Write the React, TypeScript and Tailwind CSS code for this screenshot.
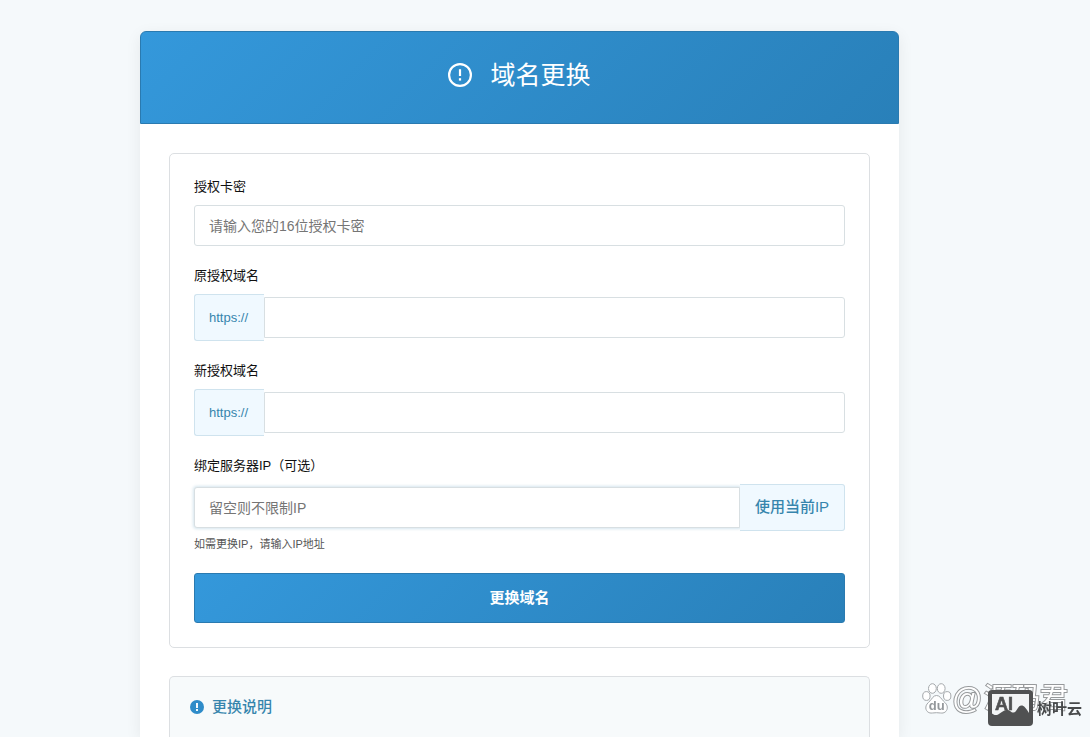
import type { ReactNode } from "react";

const inputClass =
  "h-[41px] w-full min-w-0 border border-[#d8dfe2] bg-white px-3.5 text-sm text-[#333] placeholder:text-[#757575] outline-none";

const AlertOutline = () => (
  <svg viewBox="0 0 24 24" className="size-6 shrink-0" fill="none" aria-hidden="true">
    <circle cx="12" cy="12" r="10.9" stroke="currentColor" strokeWidth="2.2" />
    <path d="M12 6.2v6.8" stroke="currentColor" strokeWidth="2.2" />
    <path d="M12 15.2v2.4" stroke="currentColor" strokeWidth="2.2" />
  </svg>
);

const AlertSolid = () => (
  <svg viewBox="0 0 14 14" className="size-3.5 shrink-0" aria-hidden="true">
    <circle cx="7" cy="7" r="7" fill="#2f8cc9" />
    <path d="M7 2.9v5" stroke="#fff" strokeWidth="1.9" />
    <path d="M7 9v1.9" stroke="#fff" strokeWidth="1.9" />
  </svg>
);

const Field = ({ id, label, children }: { id: string; label: string; children: ReactNode }) => (
  <div>
    <label htmlFor={id} className="mb-2 block text-[13px] leading-5 text-[#111]">
      {label}
    </label>
    {children}
  </div>
);

const DomainInput = ({ id }: { id: string }) => (
  <div className="flex h-[47px] items-center">
    <span className="flex h-full w-[70px] shrink-0 items-center rounded-l-[3px] border border-r-0 border-[#cfe3ee] bg-[#f0f9ff] pl-3.5 text-[13px] text-[#3685ad]">
      https://
    </span>
    <input id={id} type="text" className={`${inputClass} rounded-r-[3px]`} />
  </div>
);

const Watermark = () => (
  <div className="pointer-events-none fixed right-1.5 bottom-2 h-14 w-[162px]" aria-hidden="true">
    <svg viewBox="0 0 30 32" className="absolute top-[10px] left-0 h-8 w-[30px]" fill="#fff" stroke="#a3a7aa">
      <ellipse cx="10.4" cy="5.5" rx="3.9" ry="4.8" />
      <ellipse cx="19.2" cy="5.5" rx="3.9" ry="4.8" />
      <ellipse cx="4.4" cy="13" rx="3.7" ry="4.4" />
      <ellipse cx="25.2" cy="13" rx="3.7" ry="4.4" />
      <path d="M14.5 12.5c3.4 0 4.6 3.200 6.800 5.400 2.300 2.200 4.400 4 4 7.300-.5 3.600-3.400 5.300-6.600 4.800-2.800-.4-5.600-.4-8.400 0-3.300.5-6.200-1.400-6.500-5-.2-3.100 2-5 4.200-7.100 2.200-2.200 3.100-5.400 6.500-5.400z" />
      <text x="14.700" y="27" textAnchor="middle" fontSize="13" fill="#94989b" stroke="none" className="font-['Liberation_Sans',sans-serif] font-bold">
        du
      </text>
    </svg>
    <span className="absolute top-2.5 left-[30px] text-[30px] leading-8 whitespace-nowrap text-white [-webkit-text-stroke:2px_#96999b] [paint-order:stroke_fill]">
      @
    </span>
    <span className="absolute top-2.5 left-[62px] text-[28px] leading-8 whitespace-nowrap text-white [-webkit-text-stroke:2px_#96999b] [paint-order:stroke_fill]">
      源码君
    </span>
    <svg viewBox="0 0 45 36" className="absolute top-[17px] left-[66px] h-9 w-[45px]">
      <rect width="45" height="36" rx="4" fill="#505152" />
      <path d="M4 4h37v19c-3-5-5-7.500-7.500-7.500-4 0-4.500 7-8 7-3 0-3.500-3-7-2.500-4.500.6-6.500 4.500-10 5-2 .3-3.200-.5-4.500-1.500z" fill="#f2f4f5" />
      <text x="7" y="20" fontSize="18" fill="#505152" stroke="#505152" strokeWidth="0.600" className="font-['Liberation_Sans',sans-serif] font-bold">
        AI
      </text>
    </svg>
    <span className="absolute top-[26px] left-[115px] text-[15px] leading-5 font-bold whitespace-nowrap text-[#484a4b]">
      树叶云
    </span>
  </div>
);

const App = () => {
  return (
    <div
      lang="zh-CN"
      className="flex min-h-screen flex-col bg-[#f5f9fb] pt-[31px] pr-[51px] font-['Liberation_Sans','Noto_Sans_CJK_SC',sans-serif]"
    >
      <main className="mx-auto flex w-full max-w-[759px] flex-1 flex-col rounded-t-md bg-white shadow-[0_4px_16px_rgba(0,0,0,0.07)]">
        <header className="flex h-[93px] items-start justify-center rounded-t-md border border-[#2a7ab0] bg-linear-135 from-[#3498db] to-[#2980b9] pt-[23px] text-white">
          <h1 className="flex items-center gap-[18px] text-[25px] leading-10 font-normal">
            <AlertOutline />
            域名更换
          </h1>
        </header>

        <div className="flex flex-1 flex-col gap-7 px-[29px] pt-[29px]">
          <form className="rounded-[5px] border border-[#dcdfe2] px-6 pt-[23px] pb-6" onSubmit={(e) => e.preventDefault()}>
            <div className="flex flex-col gap-5">
              <Field id="card-key" label="授权卡密">
                <input
                  id="card-key"
                  type="text"
                  maxLength={16}
                  placeholder="请输入您的16位授权卡密"
                  className={`${inputClass} block rounded-[3px]`}
                />
              </Field>

              <Field id="old-domain" label="原授权域名">
                <DomainInput id="old-domain" />
              </Field>

              <Field id="new-domain" label="新授权域名">
                <DomainInput id="new-domain" />
              </Field>

              <Field id="server-ip" label="绑定服务器IP（可选）">
                <div className="flex h-[47px] items-center">
                  <input
                    id="server-ip"
                    type="text"
                    placeholder="留空则不限制IP"
                    className={`${inputClass} rounded-l-[3px] shadow-[0_0_3px_1px_rgba(52,130,170,0.2)]`}
                  />
                  <button
                    type="button"
                    className="relative h-full w-[105px] shrink-0 rounded-r-[3px] border border-l-0 border-[#cfe3ee] bg-[#f0f9ff] text-[15px] font-medium text-[#3685ad]"
                  >
                    使用当前IP
                  </button>
                </div>
                <p className="mt-1 text-[11px] leading-[18px] text-[#555]">如需更换IP，请输入IP地址</p>
              </Field>

              <button
                type="submit"
                className="h-[50px] w-full rounded-[3px] border border-[#2a7ab0] bg-linear-135 from-[#3498db] to-[#2980b9] text-[15px] font-bold text-white"
              >
                更换域名
              </button>
            </div>
          </form>

          <section className="flex-1 rounded-t-[5px] border border-b-0 border-[#dcdfe2] bg-[#f7fafb] px-5 pt-[18px]">
            <h2 className="flex items-center gap-2 text-[15px] leading-6 font-medium text-[#3685ad]">
              <AlertSolid />
              更换说明
            </h2>
          </section>
        </div>
      </main>

      <Watermark />
    </div>
  );
};

export default App;
